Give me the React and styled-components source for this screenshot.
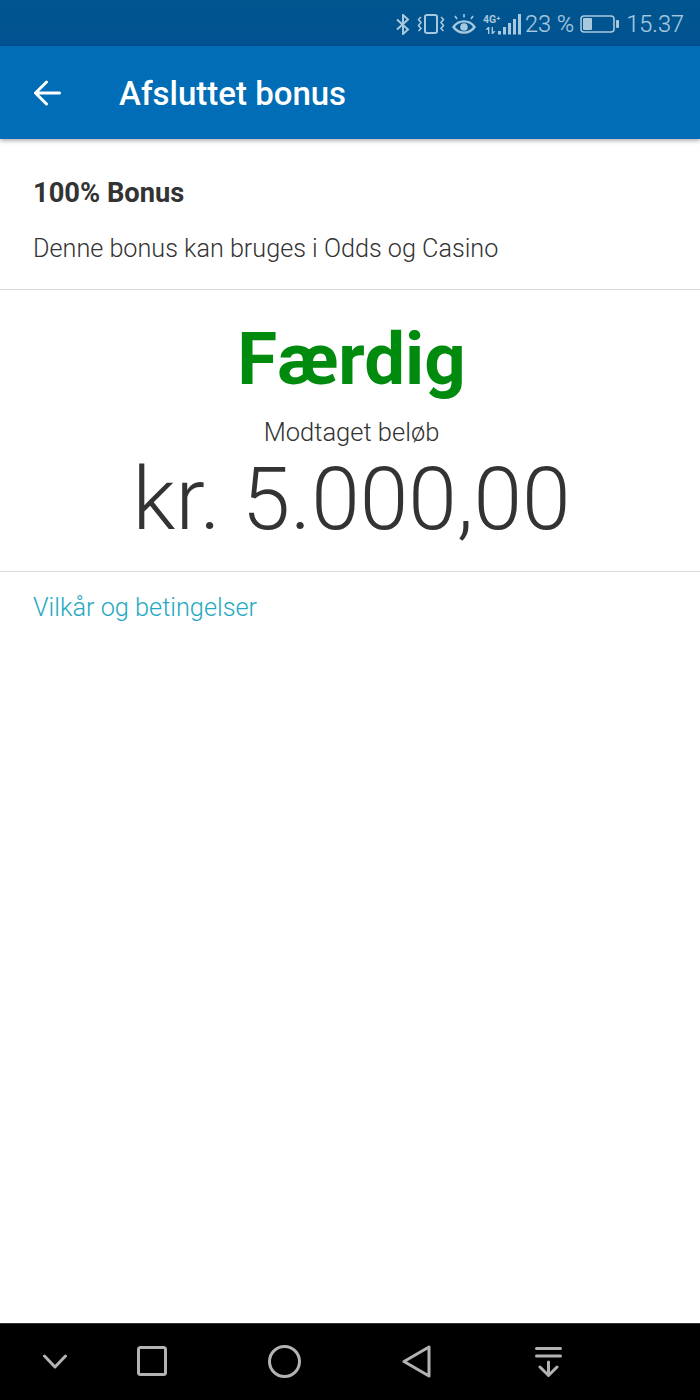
import React from "react";
import styled, { createGlobalStyle } from "styled-components";

const Global = createGlobalStyle`
  html, body { margin: 0; padding: 0; background: #fff; }
  body { font-family: Roboto, "Liberation Sans", sans-serif; }
`;
const Page = styled.div`
  width: 700px; height: 1400px; display: flex; flex-direction: column; background: #fff; overflow: hidden;
`;
const StatusBar = styled.div`
  height: 46px; flex: none; background: linear-gradient(#00568f, #005290); display: flex; align-items: center;
  justify-content: flex-end; padding: 2px 16px 0 0; box-sizing: border-box; color: #a8c8de;
`;
const StatusText = styled.span`
  font-size: 23.5px; font-weight: 300; line-height: 44px; margin-left: ${p => p.$ml || 0}px;
  -webkit-text-stroke: 0.2px #a8c8de;
`;
const StatusIcon = styled.svg`
  display: block; flex: none; margin-left: ${p => p.$ml || 0}px;
`;
const AppBar = styled.header`
  height: 93px; flex: none; background: #006db6; display: flex; align-items: center; padding-left: 34px;
  box-sizing: border-box; box-shadow: 0 2px 4px rgba(0,0,0,.3); position: relative;
`;
const BackIcon = styled.svg`
  display: block; flex: none; margin-right: 58px;
`;
const Title = styled.h1`
  margin: 3px 0 0; color: #fff; font-size: 33px; font-weight: 500; line-height: 40px;
`;
const Intro = styled.section`
  height: 151px; flex: none; box-sizing: border-box; padding: 37px 33px 0; border-bottom: 1px solid #d9d9d9;
`;
const BonusName = styled.div`
  font-size: 27.3px; font-weight: 700; color: #333; line-height: 34px;
`;
const BodyText = styled.div`
  font-size: 25.2px; font-weight: 300; color: #333; line-height: 34px; margin-top: 22px;
`;
const Result = styled.section`
  height: 282px; flex: none; box-sizing: border-box; border-bottom: 1px solid #d9d9d9; display: flex;
  flex-direction: column; align-items: center; padding-left: 3px;
`;
const Status = styled.div`
  font-size: 72.6px; font-weight: 700; color: #008a0e; line-height: 84px; margin-top: 28px;
`;
const AmountLabel = styled.div`
  font-size: 25.5px; font-weight: 300; color: #333; line-height: 34px; margin-top: 13px;
`;
const Amount = styled.div`
  font-size: 87.4px; font-weight: 300; color: #333; line-height: 100px; margin-top: 0;
`;
const TermsLink = styled.a`
  font-size: 25.3px; font-weight: 300; color: #1fa9c2; line-height: 34px; padding: 19px 33px 0; display: block;
`;
const Spacer = styled.div`flex: 1;`;
const NavBar = styled.nav`
  height: 77px; flex: none; background: #000; border-top: 1px solid #333; box-sizing: border-box;
  display: flex; align-items: center; padding: 0 0 2px 43px;
`;
const NavIcon = styled.svg`
  display: block; flex: none; margin-left: ${p => p.$ml || 0}px; fill: none; stroke: #b3b3b3; stroke-width: 3;
  stroke-linecap: round; stroke-linejoin: round;
`;

export default function App() {
  return (
    <Page>
      <Global />
      <StatusBar>
        <StatusIcon width="14" height="21" viewBox="0 0 14 21" fill="none" stroke="#a8c8de" strokeWidth="2">
          <path d="M1 5.5l11 10-5 4.5V1l5 4.5L1 15.5" />
        </StatusIcon>
        <StatusIcon $ml="7" width="28" height="20" viewBox="0 0 28 20" fill="none" stroke="#a8c8de" strokeWidth="2">
          <rect x="8" y="1" width="12" height="18" rx="2" />
          <path d="M4 3L1.5 5.5l2.5 3-2.5 3 2.5 3L1.5 17M24 3l2.5 2.5-2.5 3 2.5 3-2.5 3 2.5 2.5" strokeWidth="1.6" />
        </StatusIcon>
        <StatusIcon $ml="7" width="24" height="21" viewBox="0 0 24 21" fill="none" stroke="#a8c8de" strokeWidth="2.4">
          <path d="M1.5 13c5-7.5 16-7.5 21 0-5 7.5-16 7.5-21 0z" />
          <circle cx="12" cy="13" r="3.8" fill="#a8c8de" stroke="none" />
          <path d="M5 5L3 2M12 3.5V0M19 5l2-3" strokeWidth="1.6" />
        </StatusIcon>
        <StatusIcon $ml="7" width="39" height="21" viewBox="0 0 39 21" fill="#a8c8de">
          <text x="0" y="9" fontSize="10.5" fontWeight="700" fontFamily="Roboto, sans-serif">4G⁺</text>
          <path d="M5 20v-7h1.4v7zM8.6 13h1.4v7H8.6zM2.4 15.8L5 13v2.8zM12.6 17.2L10 20v-2.8z" />
          <rect x="15" y="17" width="3" height="3.5" />
          <rect x="20" y="13" width="3" height="7.5" />
          <rect x="25" y="9" width="3" height="11.5" />
          <rect x="30" y="5" width="3" height="15.5" />
          <rect x="35" y="0" width="3" height="20.5" />
        </StatusIcon>
        <StatusText $ml="3">23 %</StatusText>
        <StatusIcon $ml="6" width="39" height="18" viewBox="0 0 39 18" fill="none">
          <rect x="1" y="1" width="33" height="16" rx="3" stroke="#a8c8de" strokeWidth="1.6" />
          <rect x="3" y="3" width="9" height="12" rx="1" fill="#a8c8de" />
          <rect x="36" y="5" width="3" height="8" rx="1" fill="#a8c8de" />
        </StatusIcon>
        <StatusText $ml="7">15.37</StatusText>
      </StatusBar>
      <AppBar>
        <BackIcon width="27" height="26" viewBox="0 0 27 26" fill="none" stroke="#fff" strokeWidth="3" strokeLinecap="round" strokeLinejoin="round">
          <path d="M25.5 13H2M12.5 2L1.5 13l11 11" />
        </BackIcon>
        <Title>Afsluttet bonus</Title>
      </AppBar>
      <Intro>
        <BonusName>100% Bonus</BonusName>
        <BodyText>Denne bonus kan bruges i Odds og Casino</BodyText>
      </Intro>
      <Result>
        <Status>Færdig</Status>
        <AmountLabel>Modtaget beløb</AmountLabel>
        <Amount>kr. 5.000,00</Amount>
      </Result>
      <TermsLink>Vilkår og betingelser</TermsLink>
      <Spacer />
      <NavBar>
        <NavIcon width="24" height="15" viewBox="0 0 24 15"><path d="M1.5 2L12 13 22.5 2" /></NavIcon>
        <NavIcon $ml="70" width="30" height="30" viewBox="0 0 30 30"><rect x="1.5" y="1.5" width="27" height="27" rx="2" /></NavIcon>
        <NavIcon $ml="101" width="33" height="33" viewBox="0 0 33 33"><circle cx="16.5" cy="16.5" r="15" /></NavIcon>
        <NavIcon $ml="101" width="29" height="33" viewBox="0 0 29 33"><path d="M27 2v29L2 16.5z" /></NavIcon>
        <NavIcon $ml="104" width="27" height="31" viewBox="0 0 27 31"><path d="M1.5 2.5h24M1.5 10h24M13.5 16v13M5 21l8.5 8.5L22 21" /></NavIcon>
      </NavBar>
    </Page>
  );
}
